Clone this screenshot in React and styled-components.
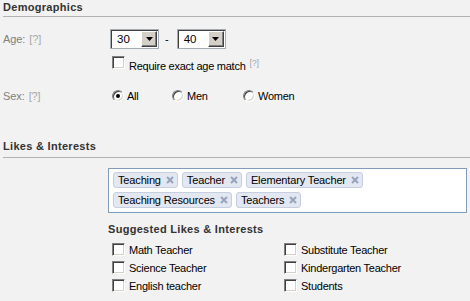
import React from "react";
import styled, { createGlobalStyle, css } from "styled-components";

const Global = createGlobalStyle`
  html, body { margin: 0; padding: 0; background: #f2f2f2; }
  body { font-family: "Liberation Sans", Arial, sans-serif; font-size: 11px; color: #000; }
`;

const Page = styled.div`
  width: 470px;
  height: 301px;
  overflow: hidden;
  background: #f2f2f2;
`;

const SectionHeader = styled.div`
  margin: ${(p) => p.$top || 0}px 0 0 3px;
  padding-bottom: ${(p) => p.$pad || 2}px;
  border-bottom: 1px solid #b2b2b2;
  font-weight: bold;
  font-size: 11px;
  line-height: 14px;
  letter-spacing: 0.3px;
  color: #333;
`;

const Row = styled.div`
  display: grid;
  grid-template-columns: 108px 1fr;
  align-items: center;
  margin-top: ${(p) => p.$top || 0}px;
  height: ${(p) => p.$h || 20}px;
`;

const Label = styled.div`
  padding-left: 3px;
  color: #808080;
  letter-spacing: -0.1px;
  line-height: 14px;
`;

const Help = styled.span`
  color: #a8a8a8;
  margin-left: 4px;
  font-size: ${(p) => (p.$sup ? 9 : 11)}px;
  vertical-align: ${(p) => (p.$sup ? "4px" : "baseline")};
`;

const Inline = styled.div`
  display: flex;
  align-items: center;
`;

const SelectBox = styled.div`
  box-sizing: border-box;
  width: 49px;
  height: 20px;
  margin-left: 2px;
  background: #fff;
  border: 1px solid #a5acb5;
  box-shadow: inset 1px 1px 0 #404040;
  display: flex;
  align-items: center;
  justify-content: space-between;
  padding: 1px 1px 1px 6px;
  font-size: 11.5px;
`;

const DropButton = styled.span`
  box-sizing: border-box;
  width: 16px;
  height: 16px;
  background: #d4d0c8;
  border: 1px solid;
  border-color: #fff #404040 #404040 #fff;
  box-shadow: inset -1px -1px 0 #808080;
  display: flex;
  align-items: center;
  justify-content: center;
`;

const Dash = styled.span`
  margin: 0 6px;
`;

const boxStyles = css`
  display: inline-block;
  box-sizing: border-box;
  width: 13px;
  height: 13px;
  background: #fff;
  border: 1px solid;
  border-color: #808080 #fff #fff #808080;
  box-shadow: inset 1px 1px 0 #404040, inset -1px -1px 0 #d4d0c8;
  flex: none;
`;

const CheckBox = styled.span`
  ${boxStyles}
  margin: 0 4px 0 4px;
`;

const CheckText = styled.span`
  letter-spacing: -0.25px;
  line-height: 14px;
  position: relative;
  top: ${(p) => p.$drop || 0}px;
`;

const Radio = styled.span`
  ${boxStyles}
  width: 12px;
  height: 12px;
  border-radius: 50%;
  margin: 0 3px 0 4px;
  position: relative;
  ${(p) =>
    p.$checked &&
    css`
      &::after {
        content: "";
        position: absolute;
        left: 3px;
        top: 3px;
        width: 4px;
        height: 4px;
        border-radius: 50%;
        background: #000;
      }
    `}
`;

const RadioOption = styled.label`
  display: flex;
  align-items: center;
  width: ${(p) => p.$w}px;
`;

const TokenBox = styled.div`
  box-sizing: border-box;
  margin: 10px 3px 0 108px;
  height: 45px;
  background: #fff;
  border: 1px solid #7f9db9;
  padding: 3px 4px;
  display: flex;
  flex-wrap: wrap;
  align-content: flex-start;
  gap: 4px;
`;

const Token = styled.span`
  box-sizing: border-box;
  height: 16px;
  display: inline-flex;
  align-items: center;
  gap: 5px;
  padding: 0 3px 0 4px;
  background: #e2e7f1;
  border: 1px solid #c6cfdf;
  border-radius: 3px;
  letter-spacing: -0.15px;
  line-height: 14px;
`;

const SubHeader = styled.div`
  margin: 9px 0 0 108px;
  font-weight: bold;
  line-height: 14px;
  letter-spacing: 0.3px;
  color: #333;
`;

const SuggestGrid = styled.div`
  margin: 4px 0 0 108px;
  display: grid;
  grid-template-columns: 172px 1fr;
  grid-auto-flow: column;
  grid-template-rows: repeat(3, 18px);
`;

const SuggestItem = styled.label`
  display: flex;
  align-items: center;
`;

const Arrow = () => (
  <svg width="7" height="4" viewBox="0 0 7 4">
    <path d="M0 0h7L3.5 4z" fill="#000" />
  </svg>
);

const Close = () => (
  <svg width="8" height="8" viewBox="0 0 8 8">
    <path d="M1 1l6 6M7 1L1 7" stroke="#98a4be" strokeWidth="2" />
  </svg>
);

const Select = ({ value }) => (
  <SelectBox>
    <span>{value}</span>
    <DropButton>
      <Arrow />
    </DropButton>
  </SelectBox>
);

const tokens = ["Teaching", "Teacher", "Elementary Teacher", "Teaching Resources", "Teachers"];
const suggestions = [
  "Math Teacher",
  "Science Teacher",
  "English teacher",
  "Substitute Teacher",
  "Kindergarten Teacher",
  "Students",
];

export default function App() {
  return (
    <Page>
      <Global />
      <SectionHeader $pad={2}>Demographics</SectionHeader>

      <Row $top={12}>
        <Label>
          Age:<Help>[?]</Help>
        </Label>
        <Inline>
          <Select value="30" />
          <Dash>-</Dash>
          <Select value="40" />
        </Inline>
      </Row>

      <Row $top={5} $h={16}>
        <span />
        <Inline>
          <CheckBox />
          <CheckText $drop={2}>
            Require exact age match<Help $sup>[?]</Help>
          </CheckText>
        </Inline>
      </Row>

      <Row $top={18} $h={16}>
        <Label>
          Sex:<Help>[?]</Help>
        </Label>
        <Inline>
          <RadioOption $w={60}>
            <Radio $checked />
            <CheckText>All</CheckText>
          </RadioOption>
          <RadioOption $w={71}>
            <Radio />
            <CheckText>Men</CheckText>
          </RadioOption>
          <RadioOption $w={80}>
            <Radio />
            <CheckText>Women</CheckText>
          </RadioOption>
        </Inline>
      </Row>

      <SectionHeader $top={35} $pad={4}>
        Likes &amp; Interests
      </SectionHeader>

      <TokenBox>
        {tokens.map((t) => (
          <Token key={t}>
            {t}
            <Close />
          </Token>
        ))}
      </TokenBox>

      <SubHeader>Suggested Likes &amp; Interests</SubHeader>
      <SuggestGrid>
        {suggestions.map((s) => (
          <SuggestItem key={s}>
            <CheckBox />
            <CheckText $drop={1}>{s}</CheckText>
          </SuggestItem>
        ))}
      </SuggestGrid>
    </Page>
  );
}
